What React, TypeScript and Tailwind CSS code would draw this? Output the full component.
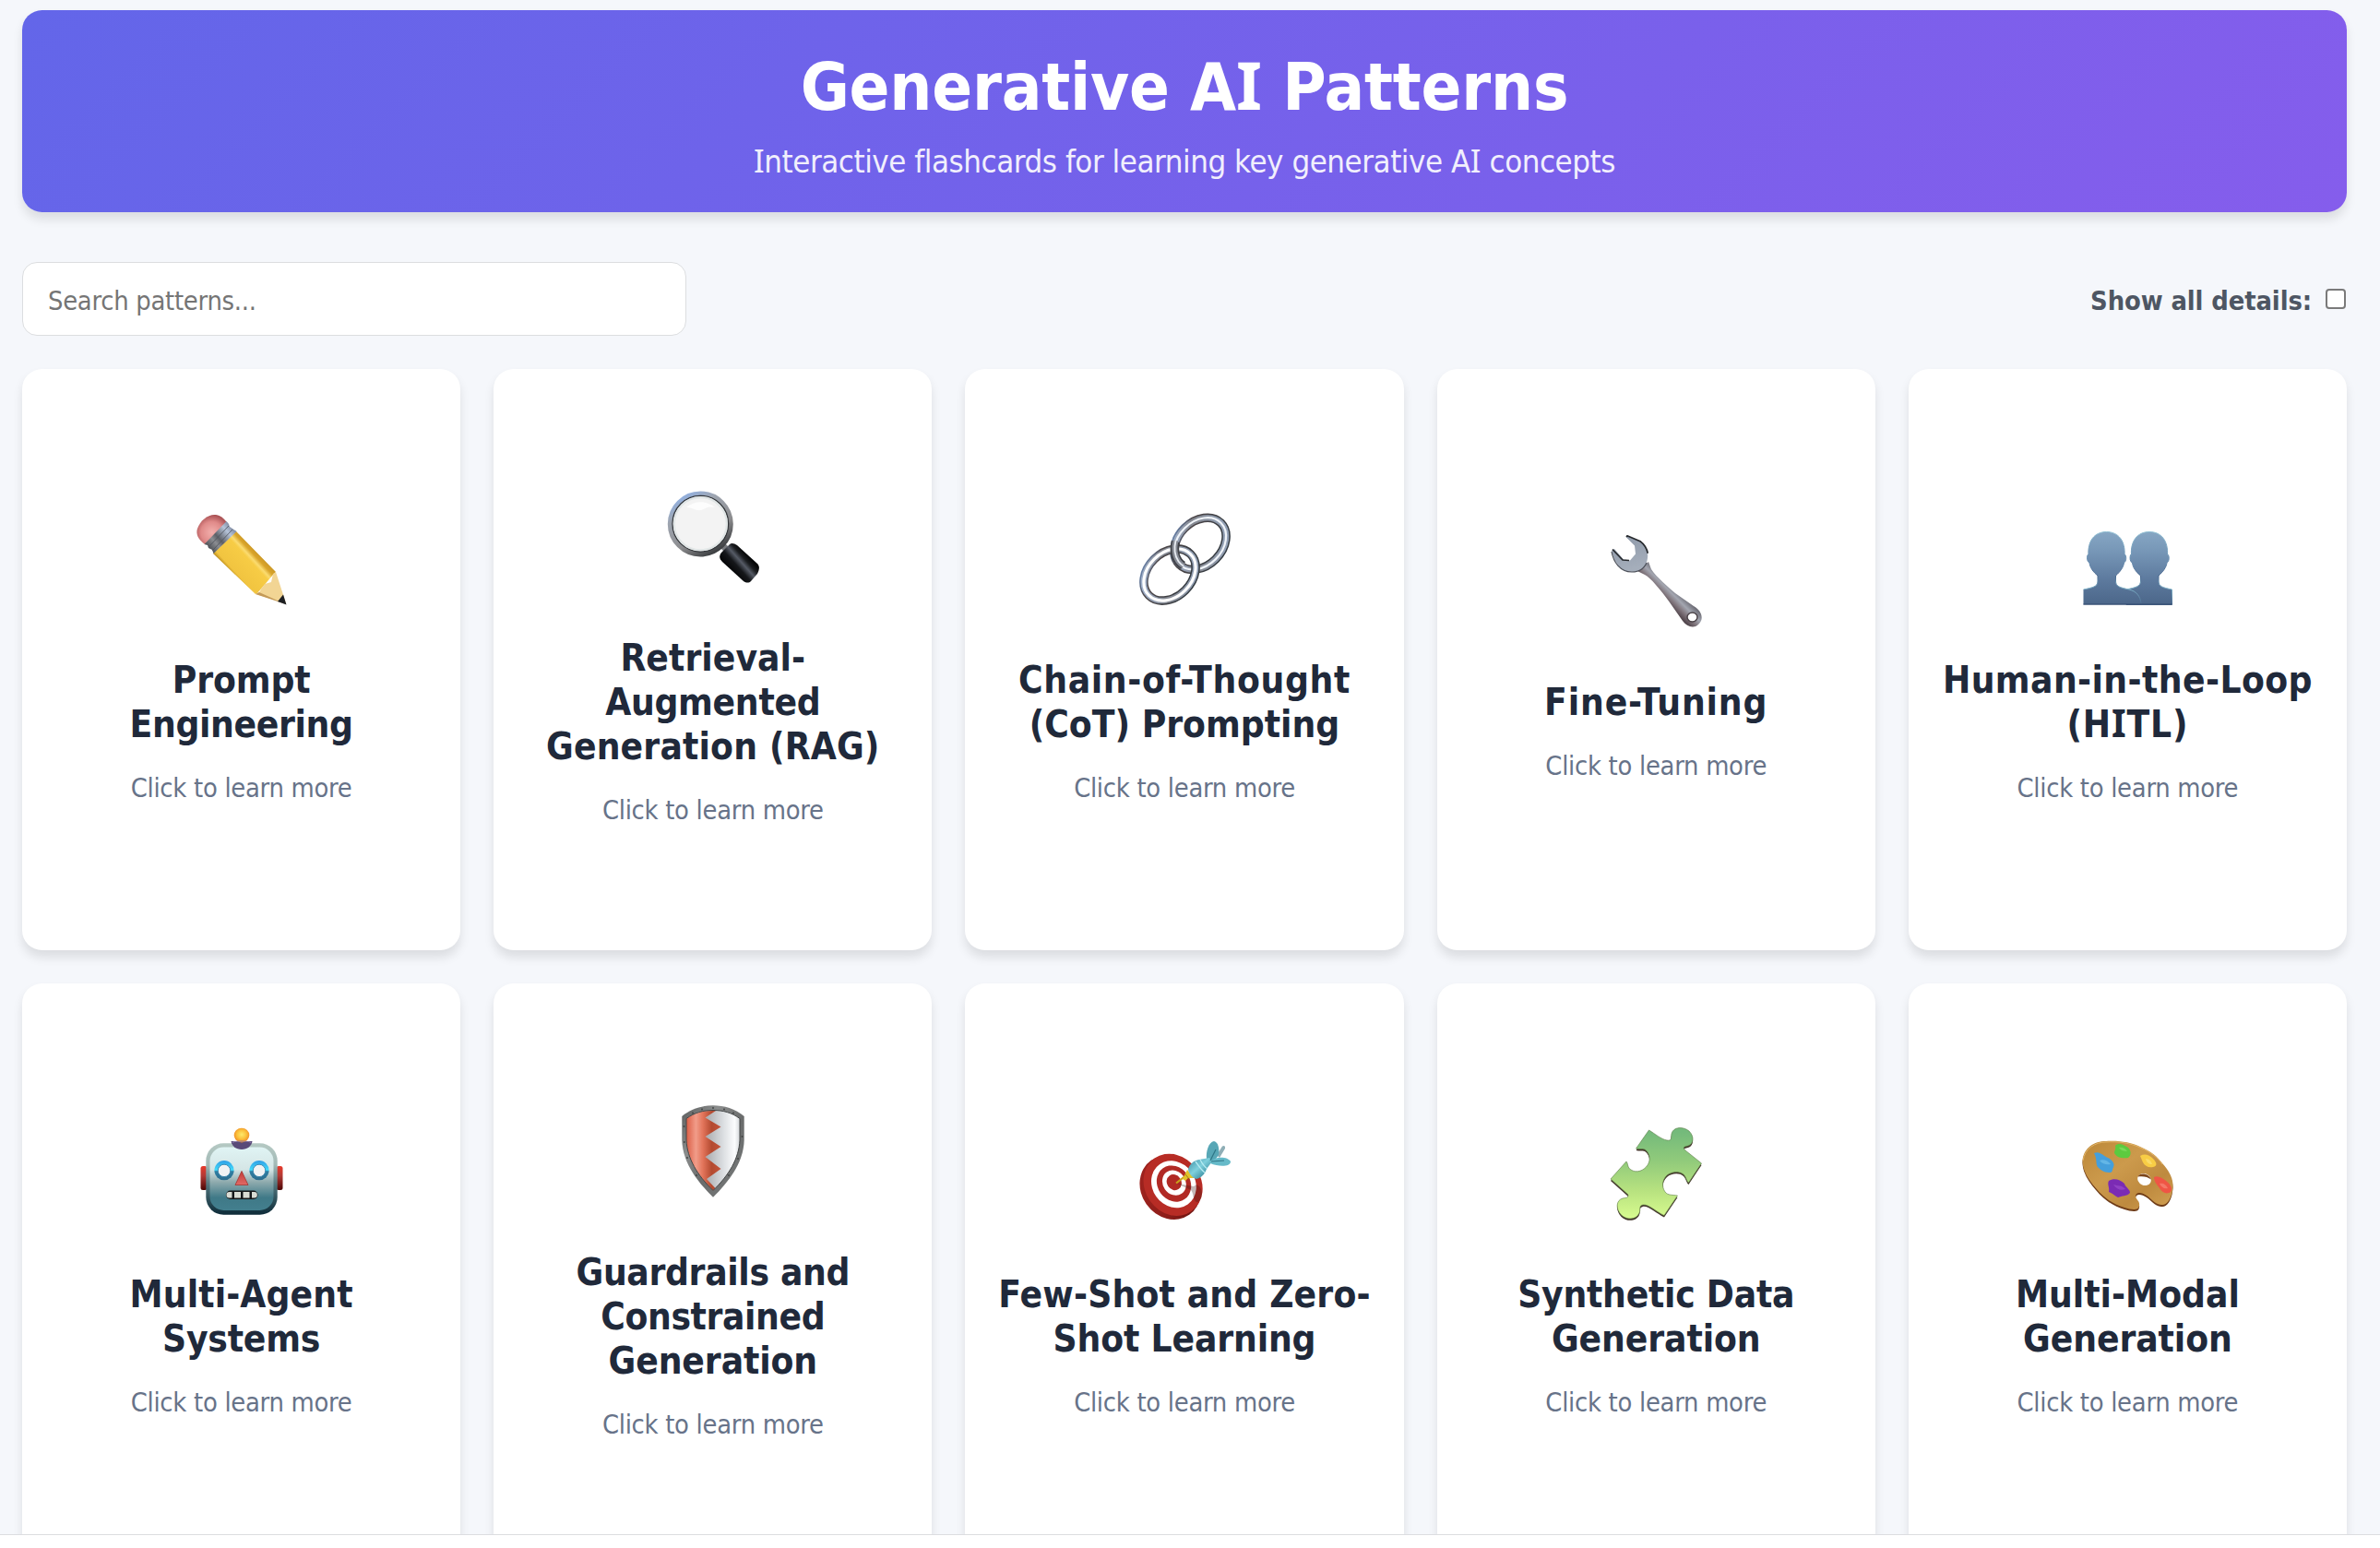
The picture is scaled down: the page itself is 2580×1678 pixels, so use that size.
import { useState, type ReactNode } from "react";

function Pencil() {
  return (
    <svg viewBox="0 0 100 100" className="size-[100px]">
      <defs>
        <linearGradient id="pn-body" gradientUnits="userSpaceOnUse" x1="33" y1="72" x2="72" y2="36">
          <stop offset="0" stopColor="#a87a10" />
          <stop offset=".16" stopColor="#b98a1c" />
          <stop offset=".24" stopColor="#f1c440" />
          <stop offset=".62" stopColor="#f7cc45" />
          <stop offset=".68" stopColor="#fbdc70" />
          <stop offset=".76" stopColor="#d9a42a" />
          <stop offset="1" stopColor="#b5841b" />
        </linearGradient>
        <linearGradient id="pn-metal" gradientUnits="userSpaceOnUse" x1="13" y1="40" x2="42" y2="14">
          <stop offset="0" stopColor="#3f4247" />
          <stop offset=".3" stopColor="#8b8d92" />
          <stop offset=".45" stopColor="#5d6067" />
          <stop offset=".75" stopColor="#b5c3d8" />
          <stop offset="1" stopColor="#6d7890" />
        </linearGradient>
        <radialGradient id="pn-eraser" cx=".5" cy=".6" r=".6">
          <stop offset="0" stopColor="#f3b0ad" />
          <stop offset=".6" stopColor="#e08a89" />
          <stop offset="1" stopColor="#a84f52" />
        </radialGradient>
      </defs>
      <path d="M10 34C3 29 0 23 2 17 5 8 14 1 22 2c6 1 10 5 12 9z" fill="url(#pn-eraser)" />
      <path d="M19 44 44 20 87 64 84 67 67 87 65 88z" fill="url(#pn-body)" />
      <path d="M65 88 69 86 72 81 75 77 82 75 84 66 87 64 98 98z" fill="#f2d594" />
      <path d="M65 88 69 86 91 96 98 99z" fill="#c49a58" />
      <path d="M89 96 95 88.500 98.500 99.500z" fill="#1d1f22" />
      <path d="M9.500 34 33.500 9 36 12 37 15 40 17 44.500 20 19.500 44 18 40 14 38 13 35z" fill="url(#pn-metal)" />
      <path d="m14 37 22-23M18 41l22-23" stroke="#4d525c" strokeWidth=".8" />
    </svg>
  );
}

function Magnifier() {
  return (
    <svg viewBox="0 0 100 100" className="size-[100px]">
      <defs>
        <linearGradient id="mg-ring" x1=".1" y1="0" x2=".7" y2="1">
          <stop offset="0" stopColor="#8fb3ec" />
          <stop offset=".3" stopColor="#9ea5b0" />
          <stop offset=".7" stopColor="#8c8c8e" />
          <stop offset="1" stopColor="#3d3f42" />
        </linearGradient>
        <linearGradient id="mg-handle" gradientUnits="userSpaceOnUse" x1="69" y1="86" x2="87" y2="70">
          <stop offset="0" stopColor="#050607" />
          <stop offset=".35" stopColor="#15171a" />
          <stop offset=".6" stopColor="#565b66" />
          <stop offset=".8" stopColor="#1b1d20" />
          <stop offset="1" stopColor="#060708" />
        </linearGradient>
      </defs>
      <path d="m60 59 9 9" stroke="#77797d" strokeWidth="7" />
      <circle cx="36.300" cy="36" r="32.500" fill="#f3f3f3" stroke="url(#mg-ring)" strokeWidth="6" />
      <circle cx="36.300" cy="35.700" r="30.300" fill="none" stroke="#33363a" strokeWidth="1.300" />
      <circle cx="36.300" cy="35.700" r="28.600" fill="none" stroke="#e1e6e6" strokeWidth="2.200" />
      <path d="M21 18c8-7 22-8 31 0-8-2-11 2-15 3-6 1-9-3-16-3z" fill="#fff" opacity=".8" />
      <path d="M68 58c2-2 5-1 8 1l22 20c3 3 2 7 0 11l-7 8c-2 2-5 2-8 0L60 77c-3-3-4-6-1-10z" fill="url(#mg-handle)" />
    </svg>
  );
}

function Chain() {
  return (
    <svg viewBox="0 0 100 100" className="size-[100px]" fill="none">
      <defs>
        <linearGradient id="ch-dark" x1="0" y1="0" x2=".6" y2="1">
          <stop offset="0" stopColor="#6f94c8" />
          <stop offset=".3" stopColor="#4c4547" />
          <stop offset="1" stopColor="#343b41" />
        </linearGradient>
        <linearGradient id="ch-mid" x1="0" y1="0" x2="1" y2=".6">
          <stop offset="0" stopColor="#a9bedf" />
          <stop offset=".5" stopColor="#858890" />
          <stop offset="1" stopColor="#93a1b6" />
        </linearGradient>
      </defs>
      <g transform="rotate(-45 67 33.300)">
        <ellipse cx="67" cy="33.300" rx="31.800" ry="23.800" stroke="url(#ch-dark)" strokeWidth="9.500" />
        <ellipse cx="67" cy="33.300" rx="31.800" ry="23.800" stroke="url(#ch-mid)" strokeWidth="6.500" />
        <ellipse cx="67" cy="33.300" rx="31.800" ry="23.800" stroke="#f0f4f9" strokeWidth="2.200" />
      </g>
      <g transform="rotate(-45 34 67)">
        <ellipse cx="34" cy="67" rx="31.800" ry="23.800" stroke="url(#ch-dark)" strokeWidth="9.500" />
        <ellipse cx="34" cy="67" rx="31.800" ry="23.800" stroke="url(#ch-mid)" strokeWidth="6.500" />
        <ellipse cx="34" cy="67" rx="31.800" ry="23.800" stroke="#fff" strokeWidth="3.200" />
      </g>
      <path d="M40.500 31c-2 8-1 16 3 21.500 1.500 2 3 3.300 5 4.500" stroke="#3f4147" strokeWidth="9.500" />
      <path d="M40.500 30c-2 8-1 16.500 3 22.500 1.500 2 3 3.500 5.500 5" stroke="#858993" strokeWidth="6" />
      <path d="M40.500 30c-2 8-1 16.500 3 22.500 1.500 2 3 3.500 5.500 5" stroke="#e9edf3" strokeWidth="1.800" />
    </svg>
  );
}

function Wrench() {
  return (
    <svg viewBox="0 0 100 100" className="size-[100px]">
      <defs>
        <linearGradient id="wr-shaft" gradientUnits="userSpaceOnUse" x1="54" y1="68" x2="68" y2="54">
          <stop offset="0" stopColor="#4b3f45" />
          <stop offset=".35" stopColor="#80757c" />
          <stop offset=".65" stopColor="#a3a6b0" />
          <stop offset="1" stopColor="#6d6c75" />
        </linearGradient>
        <linearGradient id="wr-head" x1="0" y1="0" x2=".3" y2="1">
          <stop offset="0" stopColor="#8d98a8" />
          <stop offset="1" stopColor="#a5aebb" />
        </linearGradient>
      </defs>
      <path d="M42 29 45 37C51 46 63 56 71 63l20 14c9 5 11 14 6 19-5 6-13 4-18-3L65 73C55 59 44 46 38 43l-8-4z" fill="url(#wr-shaft)" />
      <path d="M19 .800 33 7c6 4 9 11 8 18-1 9-8 15-17 15C11 40 5 29 2 17l3-2 10 11.500 7 1 6-7-1-9-9-9z" fill="url(#wr-head)" />
      <path d="m3 15.500 11 11.500 7 .5M18 2l1-1.200 14 6c4 3 7 7 8.300 13" fill="none" stroke="#26292d" strokeWidth="1.700" />
      <path d="M2 18c2 11 9 22 22 22 7 0 13-3 16-10" fill="none" stroke="#4b4f58" strokeWidth="1.200" />
      <ellipse cx="89.500" cy="89" rx="5.500" ry="5" fill="#fff" stroke="#4a4247" strokeWidth="1.500" />
    </svg>
  );
}

function People() {
  const body =
    "M2.500 83C12 81 18 80 18 74V68C13 64 9.500 59 9 54 6.500 53 6 49 7 45.500H8C7 31 14 20.500 27.500 20.500S48 31 47 45.500H48C49.500 49 48.500 53 46.500 54 46 59 42 64 37.500 68V74C37.500 80 43 81 52 83 60 85 64 90 65 99.500H2.500z";
  const right =
    "M49 83C58 81 64.500 80 64.500 74V68C59.500 64 56 59 55.500 54 53 53 52.500 49 53.500 45.500H54.500C53.500 31 60.500 20.500 74 20.500S94.500 31 93.500 45.500H94.500C96 49 95 53 93 54 92.500 59 88.500 64 84 68V74C84 80 89 81 98.500 83V99.500H49z";
  return (
    <svg viewBox="0 0 100 100" className="size-[100px]">
      <defs>
        <linearGradient id="pp-fill" gradientUnits="userSpaceOnUse" x1="0" y1="20" x2="0" y2="100">
          <stop offset="0" stopColor="#86a6c3" />
          <stop offset=".25" stopColor="#7898b8" />
          <stop offset=".65" stopColor="#5d7a9e" />
          <stop offset="1" stopColor="#4b6689" />
        </linearGradient>
        <linearGradient id="pp-rim" gradientUnits="userSpaceOnUse" x1="0" y1="20" x2="0" y2="100">
          <stop offset="0" stopColor="#8fc0d4" />
          <stop offset=".45" stopColor="#5f83a8" />
          <stop offset=".6" stopColor="#46648b" />
          <stop offset=".78" stopColor="#7fb3c9" />
          <stop offset="1" stopColor="#48668b" />
        </linearGradient>
      </defs>
      <path d={right} fill="url(#pp-fill)" stroke="url(#pp-rim)" strokeWidth="1" />
      <path d={body} fill="url(#pp-fill)" />
      <path d="M2.500 83C12 81 18 80 18 74V68C13 64 9.500 59 9 54 6.500 53 6 49 7 45.500H8C7 31 14 20.500 27.500 20.500S48 31 47 45.500H48C49.500 49 48.500 53 46.500 54 46 59 42 64 37.500 68V74C37.500 80 43 81 52 83 60 85 64 90 65 98" fill="none" stroke="url(#pp-rim)" strokeWidth="1" />
      <path d="M2.500 99h96" stroke="#324a6e" strokeWidth="1.200" />
    </svg>
  );
}

function Robot() {
  return (
    <svg viewBox="0 0 100 100" className="size-[100px]">
      <defs>
        <linearGradient id="rb-edge" x1="0" y1="0" x2="0" y2="1">
          <stop offset="0" stopColor="#b5c9c3" />
          <stop offset=".3" stopColor="#a3bab7" />
          <stop offset=".6" stopColor="#4d7179" />
          <stop offset="1" stopColor="#0d2b38" />
        </linearGradient>
        <linearGradient id="rb-face" x1="0" y1="0" x2="0" y2="1">
          <stop offset="0" stopColor="#e0f4f4" />
          <stop offset=".35" stopColor="#d5e6e6" />
          <stop offset=".55" stopColor="#8fabae" />
          <stop offset=".8" stopColor="#3f7987" />
          <stop offset="1" stopColor="#437f8e" />
        </linearGradient>
        <linearGradient id="rb-ear" x1="0" y1="0" x2="0" y2="1">
          <stop offset="0" stopColor="#e83a2c" />
          <stop offset=".4" stopColor="#b23a35" />
          <stop offset="1" stopColor="#4c0605" />
        </linearGradient>
        <radialGradient id="rb-ball" cx=".5" cy=".45" r=".55">
          <stop offset="0" stopColor="#fde96b" />
          <stop offset=".55" stopColor="#fbc23c" />
          <stop offset="1" stopColor="#ee8a26" />
        </radialGradient>
        <linearGradient id="rb-eye" x1="0" y1="0" x2="0" y2="1">
          <stop offset="0" stopColor="#2f9ee6" />
          <stop offset=".48" stopColor="#43dcfb" />
          <stop offset=".55" stopColor="#2e7fa4" />
          <stop offset="1" stopColor="#2d6c8c" />
        </linearGradient>
        <linearGradient id="rb-nose" x1="0" y1="0" x2="0" y2="1">
          <stop offset="0" stopColor="#c43b37" />
          <stop offset="1" stopColor="#e06a66" />
        </linearGradient>
      </defs>
      <rect x="5.500" y="42" width="7" height="26" rx="2.500" fill="url(#rb-ear)" />
      <rect x="87.500" y="42" width="7" height="26" rx="2.500" fill="url(#rb-ear)" />
      <rect x="11.300" y="17.300" width="77.400" height="77.400" rx="19" fill="url(#rb-edge)" />
      <rect x="15.500" y="21.500" width="69" height="68.500" rx="15" fill="url(#rb-face)" />
      <path d="M38.500 15h23C61 20 56 24 50 24s-11-4-11.500-9z" fill="#594a78" />
      <ellipse cx="50" cy="8.600" rx="8.300" ry="7.800" fill="url(#rb-ball)" />
      <path d="M40 16.500c2-2 18-2 20 0" fill="none" stroke="#8a79a8" strokeWidth="1.200" />
      {[31, 69].map((x) => (
        <g key={x}>
          <circle cx={x} cy="46.700" r="10.600" fill="url(#rb-eye)" />
          <circle cx={x} cy="46.900" r="6.700" fill="#f1f3f4" stroke="#2b7aa6" strokeWidth=".8" />
        </g>
      ))}
      <path d="M50 47.500 43 62.500h14z" fill="url(#rb-nose)" stroke="#a33330" strokeWidth=".8" strokeLinejoin="round" />
      <rect x="33" y="68.500" width="34.500" height="9.500" rx="4.700" fill="#15181a" />
      <path d="M39.500 70v6.500h-2.800a3.200 3.200 0 0 1 0-6.500zM42 70h7v6.500h-7zM51.500 70h7v6.500h-7zM61 70h2.600a3.200 3.200 0 0 1 0 6.500H61z" fill="#d9dcd4" />
    </svg>
  );
}

function Shield() {
  return (
    <svg viewBox="0 0 100 100" className="size-[100px]">
      <defs>
        <linearGradient id="sh-rim" x1="0" y1="0" x2="1" y2="1">
          <stop offset="0" stopColor="#5a5c5c" />
          <stop offset=".3" stopColor="#8b8d8d" />
          <stop offset=".55" stopColor="#6a6c6c" />
          <stop offset="1" stopColor="#787b7b" />
        </linearGradient>
        <linearGradient id="sh-red" gradientUnits="userSpaceOnUse" x1="20" y1="0" x2="58" y2="0">
          <stop offset="0" stopColor="#d9583f" />
          <stop offset=".3" stopColor="#f19c89" />
          <stop offset=".5" stopColor="#e2745a" />
          <stop offset=".75" stopColor="#b34a30" />
          <stop offset="1" stopColor="#c3543a" />
        </linearGradient>
        <linearGradient id="sh-white" gradientUnits="userSpaceOnUse" x1="42" y1="0" x2="79" y2="0">
          <stop offset="0" stopColor="#a9abae" />
          <stop offset=".5" stopColor="#dadde0" />
          <stop offset=".85" stopColor="#fbfcfd" />
          <stop offset="1" stopColor="#d5d8db" />
        </linearGradient>
      </defs>
      <path d="M16.300 12C26 4 38 .300 50 .300S74 4 83.700 12V38C83 62 68 82 50 99.700 32 82 17 62 16.300 38z" fill="url(#sh-rim)" />
      <path d="M21 14.500C30 8 39 5.500 50 5.500S70 8 79 14.500V38C78 58 67 76 50 92.500 33 76 22 58 21 38z" fill="url(#sh-white)" />
      <path d="M21 14.500C30 8 39 5.500 53 6L41.500 13.500 58.500 23.500 41.500 34 58.500 45 41.500 56 58.500 69 43 80 52.500 90 50 92.500C33 76 22 58 21 38z" fill="url(#sh-red)" />
      <path d="M21 14.500C30 8 39 5.500 50 5.500S70 8 79 14.500V38C78 58 67 76 50 92.500 33 76 22 58 21 38z" fill="none" stroke="#444747" strokeWidth="1" />
      <g fill="#3e4141">
        <circle cx="50" cy="3" r=".9" /><circle cx="38" cy="4.500" r=".9" /><circle cx="62" cy="4.500" r=".9" />
        <circle cx="28" cy="8.500" r=".9" /><circle cx="72" cy="8.500" r=".9" /><circle cx="18.500" cy="23" r=".9" />
        <circle cx="81.500" cy="34" r=".9" /><circle cx="18.800" cy="40" r=".9" /><circle cx="77" cy="58" r=".9" />
        <circle cx="22" cy="57" r=".9" /><circle cx="32" cy="76" r=".9" /><circle cx="67" cy="76" r=".9" />
      </g>
    </svg>
  );
}

function Target() {
  return (
    <svg viewBox="0 0 100 100" className="size-[100px]">
      <defs>
        <linearGradient id="tg-side" x1="0" y1="0" x2="1" y2="1">
          <stop offset="0" stopColor="#a52520" />
          <stop offset=".5" stopColor="#8c1d19" />
          <stop offset="1" stopColor="#5c0f0d" />
        </linearGradient>
        <linearGradient id="tg-dart" gradientUnits="userSpaceOnUse" x1="58" y1="36" x2="72" y2="52">
          <stop offset="0" stopColor="#4fa0b3" />
          <stop offset=".5" stopColor="#7fd0dd" />
          <stop offset="1" stopColor="#3f93a6" />
        </linearGradient>
      </defs>
      <ellipse cx="34.500" cy="65.300" rx="31.500" ry="36" transform="rotate(-35 34.500 65.300)" fill="url(#tg-side)" />
      <g transform="rotate(-35 38 62)">
        <ellipse cx="37.500" cy="62" rx="30.500" ry="35" fill="#b72c25" />
        <ellipse cx="38.500" cy="62" rx="23.300" ry="26.500" fill="#fff" />
        <ellipse cx="39" cy="61.500" rx="17.700" ry="20.500" fill="#b12a25" />
        <ellipse cx="39.800" cy="61" rx="12.300" ry="14.200" fill="#fff" />
        <ellipse cx="40" cy="60.500" rx="7.800" ry="8.800" fill="#b12a25" />
      </g>
      <path d="m42 61 18 3c4-4 8 0 9 7 0 6-3 11-6 10-4-2-3-10-6-13z" fill="#3a1010" opacity=".3" />
      <path d="m41 60.500 9-7" stroke="#c8a31b" strokeWidth="2.200" />
      <path d="m48 56 5-10 8 9-7 0-3 3z" fill="#e3c32a" />
      <path d="m51 51 5 6" stroke="#8d6f10" strokeWidth=".8" />
      <path d="M85 30 91 20.500c2-1.500 3.500 0 3 2.500L88 33z" fill="#8faeb6" />
      <path d="M74 34C73 27 76 16 82 15c5 1 6 9 5 15l-5 7z" fill="#58a7b6" />
      <path d="M79 37c5-6 18-5 21 0 0 6-13 6-22 2z" fill="#66bac9" />
      <path d="M54 46c1-6 6-10 12-11l11-2 3 4-6 8c-2 6-6 10-11 11-4-1-8-5-9-10z" fill="url(#tg-dart)" />
      <path d="M62 37c3 4 6 9 10 12M67 35c2 4 5 8 8 10" fill="none" stroke="#b8ecf3" strokeWidth="1.300" />
      <path d="m78 36 6-12M79 37l14-1" stroke="#2f7686" strokeWidth="1.200" />
    </svg>
  );
}

function Puzzle() {
  const d =
    "M42.500 3C49 7 56 13 62 14 68 15 66 11 67 7 69 -1 80 -1 86 4 92 10 91 18 85 20 80 21 79 22 82 25L99.500 39 85.500 60C83 58 83 54 80 51 75 47 67 48 62 52 57 57 56 64 60 70 63 74 68 73 73.500 74L59 95.500C51 92 42 83 36 84 31 85 34 89 32 93 29 100 19 101 12.500 95 6 88 7 79 14 77 18 76 20 77 20 73L1 56 18 37C20 39 19 44 23 46 29 50 37 47 41 41 45 35 43 27 38 24 35 23 32 24 28.500 23z";
  return (
    <svg viewBox="0 0 100 101" className="h-[101px] w-[100px]">
      <defs>
        <linearGradient id="pz-fill" gradientUnits="userSpaceOnUse" x1="45" y1="5" x2="45" y2="98">
          <stop offset="0" stopColor="#74ba7b" />
          <stop offset=".35" stopColor="#92cb7b" />
          <stop offset=".7" stopColor="#b9e380" />
          <stop offset="1" stopColor="#d7fb8f" />
        </linearGradient>
      </defs>
      <path d={d} fill="#44362b" transform="translate(0 1.900)" />
      <path d={d} fill="url(#pz-fill)" stroke="#5d7c46" strokeOpacity=".65" strokeWidth=".9" strokeLinejoin="round" />
    </svg>
  );
}

function Palette() {
  const d =
    "M1.500 36C3 22 14 15 27 15 40 14 54 16 64 21 76 26 83 32 88 39 97 49 101 58 99 68 98 77 93 85 87 84 79 83 76 77 71 74 65 70 59 70 59 75 60 79 64 80 63 85 62 91 54 89 47 87 36 84 26 78 16 66 8 57 1.500 47 1.500 36z";
  return (
    <svg viewBox="0 0 100 100" className="size-[100px]">
      <defs>
        <linearGradient id="pl-wood" x1="0" y1="0" x2="1" y2="1">
          <stop offset="0" stopColor="#bb8738" />
          <stop offset=".4" stopColor="#cc9a4c" />
          <stop offset=".7" stopColor="#be8a3f" />
          <stop offset="1" stopColor="#d2a152" />
        </linearGradient>
      </defs>
      <path d={d} fill="#6f3c17" transform="translate(0 2)" />
      <path d={d} fill="url(#pl-wood)" />
      <path d="M2 36C4 23 15 16 27 16 40 15 54 17 64 22 76 27 83 33 88 40" fill="none" stroke="#e3b467" strokeWidth="1" />
      <ellipse cx="68.500" cy="56.500" rx="7.500" ry="6.300" transform="rotate(25 68.500 56.500)" fill="#fff" />
      <path d="M61.500 53.500c2-5 12-4 14.500 3-4-3-9-4-14.500-3z" fill="#7b451a" />
      <path d="M14 28c6-3 10 3 15 5 4 2 8 6 6 10s0 6-5 6-9-3-11-5c-4-3-1-9-5-16z" fill="#459fdb" />
      <path d="M20 36c4-2 9 0 12 4-4 1-9 0-12-4z" fill="#7cc8ef" opacity=".55" />
      <path d="M37 20c4-4 9-1 14 2 3 3 4 8 0 11-6 1-12 0-15-5 0-3 2-4 1-8z" fill="#5ccb3f" />
      <path d="M41 22c4-1 7 1 9 4-4 0-7-1-9-4z" fill="#8fe56e" opacity=".55" />
      <path d="M64 31c5-3 10-1 14 3 4 4 5 8 0 9-5 1-9-1-11-5z" fill="#f8cd45" />
      <path d="M70 34c4 0 6 3 7 6-4 0-6-2-7-6z" fill="#fbe27c" opacity=".7" />
      <path d="M79 54c4-2 9 1 13 4s8 8 5 12c-4 3-9 1-12-4-2-3-6-7-6-12z" fill="#ef5545" />
      <path d="M85 61c4-1 7 1 9 5-4 1-7-1-9-5z" fill="#f79080" opacity=".6" />
      <path d="M30 58c5-3 12-2 17 3 1 4 6 6 6 10-3 4-9 3-13 5-4-2-5-4-10-6 1-5-2-8 0-12z" fill="#7b2bb4" />
      <path d="M35 62c5 2 9 0 13 5-5 2-10 0-13-5z" fill="#a75ad6" opacity=".5" />
    </svg>
  );
}

function SerifI() {
  return <span className="font-['Noto_Sans',sans-serif] leading-none">I</span>;
}

type Line = { text: string; tracking: string; label?: ReactNode };
type Pattern = { icon: ReactNode; lines: Line[] };

const patterns: Pattern[] = [
  {
    icon: <Pencil />,
    lines: [
      { text: "Prompt", tracking: "tracking-[-0.1px]" },
      { text: "Engineering", tracking: "tracking-[-0.35px]" },
    ],
  },
  {
    icon: <Magnifier />,
    lines: [
      { text: "Retrieval-", tracking: "tracking-[0.05px]" },
      { text: "Augmented", tracking: "tracking-[-0.3px]" },
      { text: "Generation (RAG)", tracking: "tracking-[0.16px]" },
    ],
  },
  {
    icon: <Chain />,
    lines: [
      { text: "Chain-of-Thought", tracking: "tracking-[0.65px]" },
      { text: "(CoT) Prompting", tracking: "tracking-[0px]" },
    ],
  },
  { icon: <Wrench />, lines: [{ text: "Fine-Tuning", tracking: "tracking-[0.85px]" }] },
  {
    icon: <People />,
    lines: [
      { text: "Human-in-the-Loop", tracking: "tracking-[0.4px]" },
      { text: "(HITL)", tracking: "tracking-[0.8px]", label: <>(H<SerifI />TL)</> },
    ],
  },
  {
    icon: <Robot />,
    lines: [
      { text: "Multi-Agent", tracking: "tracking-[0.1px]" },
      { text: "Systems", tracking: "tracking-[-0.2px]" },
    ],
  },
  {
    icon: <Shield />,
    lines: [
      { text: "Guardrails and", tracking: "tracking-[-0.35px]" },
      { text: "Constrained", tracking: "tracking-[-0.4px]" },
      { text: "Generation", tracking: "tracking-[-0.1px]" },
    ],
  },
  {
    icon: <Target />,
    lines: [
      { text: "Few-Shot and Zero-", tracking: "tracking-[0.15px]" },
      { text: "Shot Learning", tracking: "tracking-[-0.15px]" },
    ],
  },
  {
    icon: <Puzzle />,
    lines: [
      { text: "Synthetic Data", tracking: "tracking-[-0.25px]" },
      { text: "Generation", tracking: "tracking-[-0.1px]" },
    ],
  },
  {
    icon: <Palette />,
    lines: [
      { text: "Multi-Modal", tracking: "tracking-[0px]" },
      { text: "Generation", tracking: "tracking-[-0.1px]" },
    ],
  },
];

function titleOf(p: Pattern) {
  return p.lines.map((line) => line.text).join(" ");
}

function Card({ icon, lines }: Pattern) {
  return (
    <article className="flex h-[630px] cursor-pointer flex-col items-center justify-center rounded-[21.6px] bg-white pb-[2px] text-center shadow-[0_7.200px_10.800px_rgba(0,0,0,0.1)]">
      <div className="h-[158px]">{icon}</div>
      <h2 className="text-[40.3px] leading-[48px] font-bold whitespace-nowrap text-[#20293a]">
        {lines.map((line) => (
          <span key={line.text} className={`block ${line.tracking}`}>{line.label ?? line.text}</span>
        ))}
      </h2>
      <p className="mt-[26.200px] text-[28.8px] leading-[35px] tracking-[-0.28px] text-[#677389]">Click to learn more</p>
    </article>
  );
}

export default function App() {
  const [query, setQuery] = useState("");
  const [showAll, setShowAll] = useState(false);
  const visible = patterns.filter((p) => titleOf(p).toLowerCase().includes(query.toLowerCase()));

  return (
    <div className="h-[1678px] overflow-hidden bg-white font-['DejaVu_Sans_Condensed','DejaVu_Sans',sans-serif]">
      <div className="h-[1664px] overflow-hidden border-b border-[#dcdde0] bg-[#f5f7fb] pt-[11px] pr-9 pl-6">
        <header className="h-[219px] rounded-[21.6px] bg-[linear-gradient(135deg,#6366e9,#855dec)] pt-[43px] text-center text-white shadow-[0_7.200px_10.800px_rgba(0,0,0,0.1)]">
          <h1 className="h-20 text-[72px] leading-[80px] font-bold tracking-[-0.2px]">
            Generative A<SerifI /> Patterns
          </h1>
          <p className="mt-5 text-[34.56px] leading-[42px] tracking-[-0.46px] opacity-90">
            <SerifI />nteractive flashcards for learning key generative A<SerifI /> concepts
          </p>
        </header>

        <div className="mt-[54px] flex h-20 items-center justify-between">
          <input
            type="text"
            value={query}
            onChange={(e) => setQuery(e.target.value)}
            placeholder="Search patterns..."
            className="h-20 w-[720px] rounded-[16px] border border-[#dcdee0] bg-white px-[27px] pt-1 text-[28.8px] tracking-[-0.27px] text-[#20293a] placeholder:text-[#757575]"
          />
          <label className="flex items-center pr-[1px] text-[28.8px] leading-[35px] font-bold tracking-[-0.1px] text-[#4e5663]">
            <span className="pt-1">Show all details:</span>
            <input
              type="checkbox"
              checked={showAll}
              onChange={(e) => setShowAll(e.target.checked)}
              className="ml-[15px] size-[22px] appearance-none rounded-[4px] border-2 border-[#7a7a7a] bg-white checked:bg-[#6366e9]"
            />
          </label>
        </div>

        <main className="mt-9 grid grid-cols-5 gap-9">
          {visible.map((p) => (
            <Card key={titleOf(p)} {...p} />
          ))}
        </main>
      </div>
    </div>
  );
}
